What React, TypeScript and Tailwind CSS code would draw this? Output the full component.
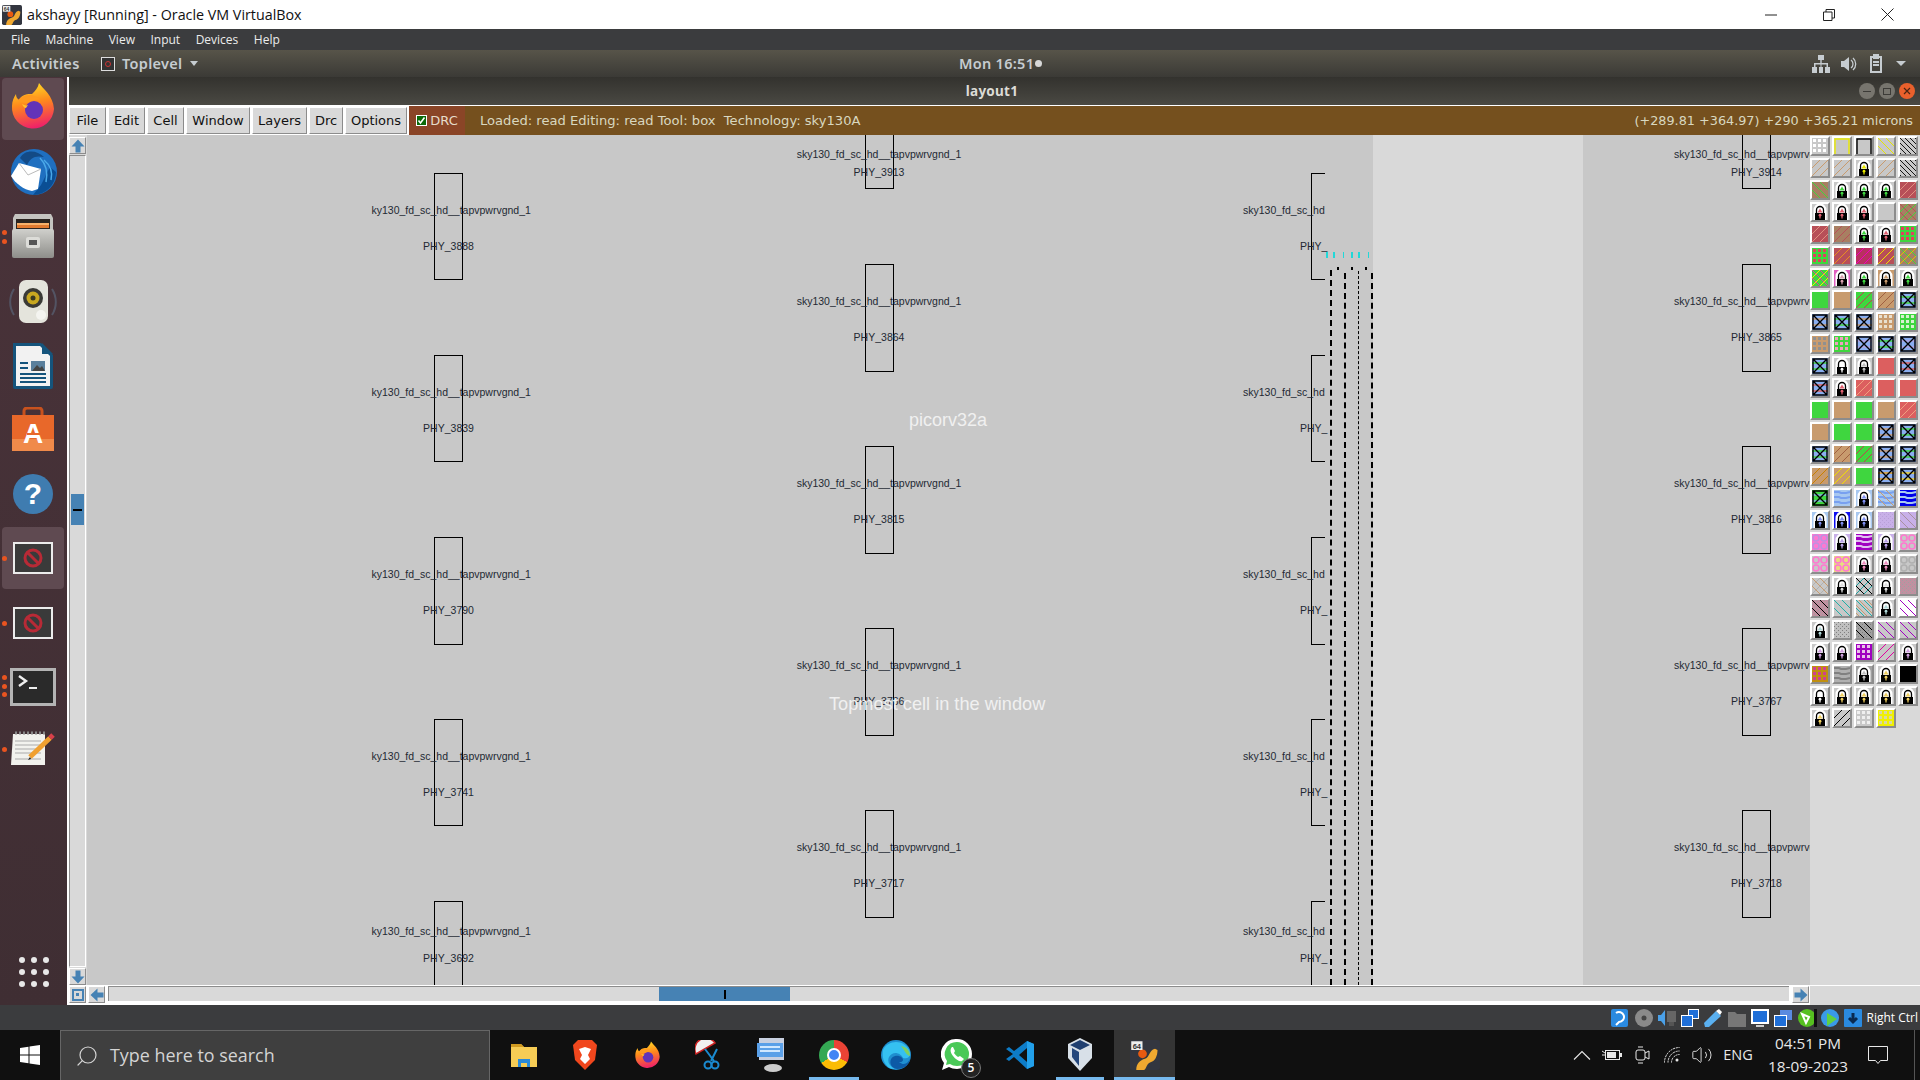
import { Search, Volume2 } from "lucide-react";
import type { ReactNode } from "react";

// ---------- layer palette (magic layout side panel) ----------
type TileSpec = {
  bg?: string;
  s?: string[]; // "/" stripes
  b?: string[]; // "\" stripes
  gap?: number;
  x?: string; // black box with a cross, on blue
  o?: string; // open outline
  dots?: string;
  checker?: string;
  waves?: string;
  lock?: string;
  rings?: string;
};

const GRAY = "#c8c8c8";
const GREEN = "#3fd63f";
const TAN = "#c89b6e";
const RED = "#b84f58";
const BROWN = "#a87f62";
const CORAL = "#dc5f5f";
const BLUE = "#8aaef0";
const TEAL = "#20b0a8";
const PURPLE = "#a000c0";
const LILAC = "#c8b0e8";
const PINK = "#ff78d0";

const TILES: Record<string, TileSpec> = {
  grid: { bg: GRAY, dots: "#ffffff" },
  yo: { bg: GRAY, o: "#e8e800" },
  ko: { bg: GRAY, o: "#000000" },
  yd: { bg: GRAY, b: ["#e6e600"] },
  kd: { bg: GRAY, b: ["#000000"], gap: 5 },
  td: { bg: GRAY, s: [TAN] },
  ly: { bg: GRAY, lock: "#e8e800" },
  bg: { bg: BROWN, b: [GREEN] },
  lg: { bg: GRAY, lock: GREEN },
  rd: { bg: RED, s: ["#e09080"] },
  lr: { bg: GRAY, lock: "#e06070" },
  p: { bg: GRAY },
  bc: { bg: BROWN, s: [GREEN], b: [RED] },
  br: { bg: BROWN, s: [RED] },
  gd: { bg: GREEN, dots: "#e04060" },
  ro: { bg: RED, s: ["#e89020"] },
  rm: { bg: "#b83060", s: ["#f000c0"] },
  ry: { bg: RED, s: ["#f0e000"] },
  by: { bg: BROWN, s: ["#e0c000"], b: [GREEN] },
  gy: { bg: GREEN, s: ["#f0f000"], b: ["#e040a0"] },
  lm: { bg: "#e060c0", lock: "#d8a0b0" },
  lt: { bg: TAN, lock: TAN },
  G: { bg: GREEN },
  T: { bg: TAN },
  gr: { bg: GREEN, s: ["#c04050"] },
  tr: { bg: TAN, s: ["#a06040"] },
  xg: { bg: BLUE, x: GREEN },
  xt: { bg: BLUE, x: TAN },
  td2: { bg: TAN, dots: "#e8e0d0" },
  gd2: { bg: GREEN, dots: "#d8f0d0" },
  tg: { bg: TAN, dots: "#909090" },
  gp: { bg: GREEN, dots: "#f0a0c0" },
  xb: { bg: BLUE, x: "#b0a0e0" },
  lw: { bg: GRAY, lock: "#ffffff" },
  lk: { bg: GRAY, lock: "#c0c0c0" },
  C: { bg: CORAL },
  xr: { bg: BLUE, x: CORAL },
  cd: { bg: CORAL, s: ["#f0a080"] },
  xo: { bg: BLUE, x: "#e8a020" },
  xy: { bg: BLUE, x: "#f0d020" },
  tt: { bg: TAN, s: ["#b07030"] },
  to: { bg: TAN, s: ["#c88000"] },
  ty: { bg: TAN, s: ["#f0e000"] },
  xd: { bg: GREEN, x: BLUE },
  wv: { bg: "#a8c8f0", waves: "#78a0f0" },
  lb: { bg: "#a8c8f0", lock: "#8090f0" },
  wt: { bg: "#a8c8f0", waves: "#78a0f0", b: [TAN] },
  bb: { bg: "#0000e8", waves: "#a8c8f0" },
  ln: { bg: "#1010f0", lock: "#8090f0" },
  lc: { bg: LILAC, checker: "#b8a0d8" },
  ld: { bg: LILAC, b: ["#a890a0"] },
  pk: { bg: PINK, rings: "#c090e0" },
  ll: { bg: LILAC, lock: "#b8a0e8" },
  ps: { bg: PURPLE, waves: "#e0c0f0" },
  pr: { bg: GRAY, rings: PINK },
  yp: { bg: "#e8dc80", rings: PINK },
  lp: { bg: GRAY, lock: "#f090c0" },
  gc: { bg: GRAY, rings: "#b0b0b0" },
  gt: { bg: GRAY, b: [TAN], s: ["#b0b0b0"] },
  ls: { bg: GRAY, lock: "#e0e0e0" },
  cx: { bg: GRAY, s: ["#20a0a0"], b: ["#000000"] },
  gk: { bg: "#c090a0", checker: "#a0a0a0" },
  gb: { bg: "#c090a0", checker: "#a0a0a0", b: ["#000000"] },
  te: { bg: GRAY, b: [TEAL] },
  tn: { bg: GRAY, b: [TEAL, TAN] },
  le: { bg: GRAY, lock: "#b0d8d8" },
  wp: { bg: "#ffffff", b: [PURPLE] },
  ck: { bg: "#c0c0c0", checker: "#808080" },
  ka: { bg: "#a0a0a0", checker: "#808080", b: ["#000000"] },
  pd: { bg: GRAY, b: [PURPLE] },
  lu: { bg: GRAY, lock: "#d0a0e0" },
  pu: { bg: PURPLE, dots: "#e8c0e8" },
  mg: { bg: GRAY, s: ["#e000a0"] },
  go: { bg: "#c09010", dots: "#d04090" },
  gw: { bg: "#b0b0b0", waves: "#808080" },
  lq: { bg: "#a0a0a0", lock: "#c0c0c0" },
  lo: { bg: GRAY, lock: "#f0d060" },
  K: { bg: "#000000" },
  ln2: { bg: GRAY, lock: "#ffffff" },
  sk: { bg: GRAY, s: ["#000000"] },
  wd: { bg: GRAY, dots: "#f0f0f0" },
  yl: { bg: "#f0f000", dots: "#d8d8a0" },
};

const PALETTE = `grid yo ko yd kd
td td ly td kd
bg lg lg lg rd
lr lr lr p bc
rd br lg lr gd
gd ro rm ry by
gy lm lg lt lg
G T gr tr xg
xt xg xt td2 gd2
tg gp xb xg xb
xg lw lk C xr
xr lr cd C C
G T G T cd
T G G xt xg
xg tr gr xt xg
to ty G xo xy
xd wv lb wt bb
lb ln lb lc ld
pk ll ps ll pr
pr yp lp lp gc
gt ls cx ls gk
gb te tn le wp
le ck ka pd pd
lu lu pu mg lu
go gw lq lo K
ln2 lo lo lo lo
lo sk wd yl`;

function Lock({ hole }: { hole: string }) {
  return (
    <g>
      <path d="M1.500 16V6a6.500 6.500 0 0 1 13 0v10z" fill="#fff" />
      <path d="M4.500 9V6a3.500 3.500 0 0 1 7 0v3" fill="none" stroke="#000" strokeWidth="1.300" />
      <path d="M8 4.500 L10.500 8.500 H5.500z" fill={hole} />
      <rect x="3" y="9" width="10" height="7" fill="#000" />
      <circle cx="8" cy="11.200" r="1.400" fill={hole} />
      <rect x="7.400" y="11.500" width="1.200" height="3" fill={hole} />
    </g>
  );
}

function Tile({ code }: { code: string }) {
  const t = TILES[code];
  const offsets = [-16, -8, 0, 8, 16];
  const gap = t.gap ?? 8;
  const fine = gap === 8 ? offsets : [-15, -10, -5, 0, 5, 10, 15];
  return (
    <div className="h-5 w-5 border-2 border-t-white border-l-white border-r-[#8c8c8c] border-b-[#8c8c8c] bg-[#c8c8c8]">
      <svg width="16" height="16" viewBox="0 0 16 16" className="block">
        <rect width="16" height="16" fill={t.bg ?? GRAY} />
        {t.waves && [2, 7, 12].map((y) => <path key={y} d={`M0 ${y}h5l2 1h5l4-1`} stroke={t.waves} strokeWidth="2" fill="none" />)}
        {t.checker && Array.from({ length: 64 }, (_, i) => (i + (i >> 3)) % 2 === 0 && <rect key={i} x={(i % 8) * 2} y={(i >> 3) * 2} width="1" height="1" fill={t.checker} />)}
        {t.dots && [1, 6, 11].flatMap((y) => [1, 6, 11].map((x) => <rect key={`${x}-${y}`} x={x} y={y} width="3" height="3" fill={t.dots} />))}
        {t.rings && [4, 12].flatMap((y) => [4, 12].map((x) => <circle key={`${x}-${y}`} cx={x} cy={y} r="3" fill="none" stroke={t.rings} strokeWidth="1.600" />))}
        {t.s?.map((c, j) => fine.map((k) => <path key={`${j}-${k}`} d={`M${k + j * 3} 16L${k + j * 3 + 16} 0`} stroke={c} strokeWidth="1" />))}
        {t.b?.map((c, j) => fine.map((k) => <path key={`${j}-${k}`} d={`M${k + j * 3} 0L${k + j * 3 + 16} 16`} stroke={c} strokeWidth={gap === 8 ? 1 : 0.9} />))}
        {t.o && <path d="M1 16V1h14v15" fill="none" stroke={t.o} strokeWidth="1.400" />}
        {t.x && (
          <g>
            <path d="M0 5h16M0 11h16" stroke={t.x} strokeWidth="1.500" />
            <path d="M1 1h14v14h-14zM1 1l14 14M15 1L1 15" fill="none" stroke="#000" strokeWidth="1.400" />
          </g>
        )}
        {t.lock && <Lock hole={t.lock} />}
      </svg>
    </div>
  );
}

function LayerPanel() {
  const codes = PALETTE.split(/\s+/);
  return (
    <div className="h-full w-[110px] shrink-0 bg-[#d9d9d9] pt-px">
      <div className="grid grid-cols-[repeat(5,20px)] gap-[2px]">
        {codes.map((c, i) => (
          <Tile key={i} code={c} />
        ))}
      </div>
    </div>
  );
}

// ---------- layout canvas ----------
const COL_A = [
  { top: 173, h: 107, text: 210, phy: 246, id: "3888" },
  { top: 355, h: 107, text: 392, phy: 428, id: "3839" },
  { top: 537, h: 108, text: 574, phy: 610, id: "3790" },
  { top: 719, h: 107, text: 756, phy: 792, id: "3741" },
  { top: 901, h: 110, text: 931, phy: 958, id: "3692" },
];
const COL_B = [
  { top: 120, h: 69, text: 154, phy: 172, id: "3913", mate: "3914" },
  { top: 264, h: 108, text: 301, phy: 337, id: "3864", mate: "3865" },
  { top: 446, h: 108, text: 483, phy: 519, id: "3815", mate: "3816" },
  { top: 628, h: 108, text: 665, phy: 701, id: "3766", mate: "3767" },
  { top: 810, h: 108, text: 847, phy: 883, id: "3717", mate: "3718" },
];
const CELL = "sky130_fd_sc_hd__tapvpwrvgnd_1";
const LABEL = "absolute -translate-y-1/2 whitespace-nowrap text-[10.5px] leading-none text-[#232833]";

// canvas starts at page position 87,135
const cx = (x: number) => x - 87;
const cy = (y: number) => y - 135;

function CellBox({ left, top, w, h, open }: { left: number; top: number; w: number; h: number; open?: boolean }) {
  return (
    <div
      className={open ? "absolute border-y border-l border-black" : "absolute border border-black"}
      style={{ left: cx(left), top: cy(top), width: w, height: h }}
    />
  );
}

function Label({ x, y, center, children }: { x: number; y: number; center?: boolean; children: ReactNode }) {
  return (
    <span className={center ? `${LABEL} -translate-x-1/2` : LABEL} style={{ left: cx(x), top: cy(y) }}>
      {children}
    </span>
  );
}

function Canvas() {
  return (
    <div className="relative h-full min-w-0 flex-1 overflow-hidden bg-[#c8c8c8]">
      {/* lighter band outside the die */}
      <div className="absolute inset-y-0 left-[1286px] w-[210px] bg-[#d9d9d9]" />

      {COL_A.map((r) => (
        <div key={r.id}>
          <CellBox left={434} top={r.top} w={29} h={r.h} />
          <Label x={371.5} y={r.text}>{CELL.slice(1)}</Label>
          <Label x={448.5} y={r.phy} center>PHY_{r.id}</Label>
          <CellBox left={1311} top={r.top} w={14} h={r.h} open />
          <Label x={1243} y={r.text}>sky130_fd_sc_hd</Label>
          <Label x={1300} y={r.phy}>PHY_</Label>
        </div>
      ))}

      {COL_B.map((r) => (
        <div key={r.id}>
          <CellBox left={865} top={r.top} w={29} h={r.h} />
          <Label x={879} y={r.text} center>{CELL}</Label>
          <Label x={879} y={r.phy} center>PHY_{r.id}</Label>
          <CellBox left={1742} top={r.top} w={29} h={r.h} />
          <Label x={1674} y={r.text}>{CELL}</Label>
          <Label x={1756.5} y={r.phy} center>PHY_{r.mate}</Label>
        </div>
      ))}

      {/* power straps at the die edge */}
      {[
        { x: 1330, w: 2, top: 270 },
        { x: 1344, w: 2, top: 273 },
        { x: 1358, w: 1, top: 271 },
        { x: 1371, w: 2, top: 273 },
      ].map((s) => (
        <div
          key={s.x}
          className="absolute bottom-0 border-l-2 border-dashed border-black"
          style={{ left: cx(s.x), top: cy(s.top), borderLeftWidth: s.w }}
        />
      ))}
      {[1337, 1351, 1365].map((x) => (
        <div key={x} className="absolute h-[3px] w-[2px] bg-black" style={{ left: cx(x), top: cy(267) }} />
      ))}
      {[1326, 1332.5, 1343, 1350.5, 1357.5, 1368].map((x, i) => (
        <div key={x} className={i === 2 || i === 5 ? "absolute h-[6px] w-px bg-[#22d8d8]" : "absolute h-[6px] w-[2px] bg-[#22d8d8]"} style={{ left: cx(x), top: cy(252) }} />
      ))}

      {/* hover hints that magic leaves on screen */}
      <span className="absolute left-[822px] top-[285px] -translate-y-1/2 font-['Liberation_Sans'] text-[18px] leading-none text-[#f0f0f0]">picorv32a</span>
      <span className="absolute left-[742px] top-[569px] -translate-y-1/2 font-['Liberation_Sans'] text-[18.2px] leading-none text-[#f0f0f0]">Topmost cell in the window</span>
    </div>
  );
}

// ---------- Tk widgets ----------
function Bevel({ className, children }: { className: string; children?: ReactNode }) {
  return (
    <div className={`flex items-center justify-center border border-t-white border-l-white border-r-[#8c8c8c] border-b-[#8c8c8c] bg-[#d9d9d9] ${className}`}>
      {children}
    </div>
  );
}

function Arrow({ dir }: { dir: "up" | "down" | "left" | "right" }) {
  const rot = { up: "rotate-0", down: "rotate-180", left: "-rotate-90", right: "rotate-90" }[dir];
  return (
    <svg width="14" height="14" viewBox="0 0 14 14" className={rot}>
      <path d="M7 0.5 L13.5 7.5 H9.5 V13.5 H4.5 V7.5 H0.5z" fill="#4682b4" />
    </svg>
  );
}

const MENU = [
  { label: "File", w: "w-[37px]" },
  { label: "Edit", w: "w-[37px]" },
  { label: "Cell", w: "w-[37px]" },
  { label: "Window", w: "w-[64px]" },
  { label: "Layers", w: "w-[55px]" },
  { label: "Drc", w: "w-[34px]" },
  { label: "Options", w: "w-[62px]" },
];

function Toolbar() {
  return (
    <div className="flex h-[30px] shrink-0 border-t border-white bg-[#75501e] font-['DejaVu_Sans'] text-[13px]">
      <div className="flex h-full gap-[2px] bg-white pr-[2px] pt-px text-[#111]">
        {MENU.map((m) => (
          <Bevel key={m.label} className={`h-[27px] ${m.w}`}>{m.label}</Bevel>
        ))}
      </div>
      <div className="flex h-full w-[56px] shrink-0 items-center justify-center gap-[3px] bg-[#8a4527] text-[#e6dccb]">
        <span className="flex h-[11px] w-[11px] items-center justify-center border border-white bg-[#0a6a0a]">
          <svg width="9" height="9" viewBox="0 0 9 9"><path d="M1.500 4.500 L3.500 7 L7.500 1.500" fill="none" stroke="#fff" strokeWidth="1.600" /></svg>
        </span>
        DRC
      </div>
      <div className="flex min-w-0 flex-1 items-center justify-between pl-[15px] pr-[7px] text-[#d9d8c0]">
        <span className="whitespace-pre text-[13.1px]">Loaded: read Editing: read Tool: box  Technology: sky130A</span>
        <span className="text-[12.8px]">(+289.81 +364.97) +290 +365.21 microns</span>
      </div>
    </div>
  );
}

function VerticalScroll() {
  return (
    <div className="flex h-full w-[18px] shrink-0 flex-col items-start gap-[1px] bg-[#d9d9d9] pt-[2px]">
      <Bevel className="h-[17px] w-[17px]"><Arrow dir="up" /></Bevel>
      <div className="relative w-[17px] flex-1 border border-[#8c8c8c] border-r-white border-b-white bg-[#d9d9d9]">
        <div className="absolute left-[1px] right-[1px] top-[338px] flex h-[31px] items-center justify-center bg-[#4682b4]">
          <div className="h-[2px] w-[9px] bg-black" />
        </div>
      </div>
      <Bevel className="h-[17px] w-[17px]"><Arrow dir="down" /></Bevel>
    </div>
  );
}

function HorizontalScroll() {
  return (
    <div className="flex h-[20px] shrink-0 items-start bg-white pt-[1px]">
      <Bevel className="h-[17px] w-[17px]">
        <span className="flex h-3 w-3 items-center justify-center border-2 border-[#4682b4]"><span className="h-[3px] w-[3px] bg-[#4682b4]" /></span>
      </Bevel>
      <Bevel className="ml-[2px] h-[17px] w-[17px]"><Arrow dir="left" /></Bevel>
      <div className="relative ml-[3px] h-[15px] w-[1681px] border-l border-t border-[#8c8c8c] bg-[#d9d9d9]">
        <div className="absolute bottom-0 left-[550px] top-0 flex w-[131px] items-center justify-center bg-[#4682b4]">
          <div className="h-[9px] w-[2px] bg-black" />
        </div>
      </div>
      <Bevel className="ml-[3px] h-[17px] w-[17px]"><Arrow dir="right" /></Bevel>
      <div className="ml-[1px] h-full flex-1 bg-[#d9d9d9]" />
    </div>
  );
}

// ---------- logos ----------
function Firefox({ size = 50 }: { size?: number }) {
  return (
    <svg width={size} height={size} viewBox="0 0 50 50">
      <defs>
        <linearGradient id="ffA" x1="0.3" y1="0" x2="0.5" y2="1"><stop offset="0" stopColor="#ffe226" /><stop offset="0.45" stopColor="#ff8a1c" /><stop offset="1" stopColor="#ee1f6a" /></linearGradient>
      </defs>
      <path d="M31 1c4 6 14 12 15 26a21 21 0 1 1-42-3c0-5 2-9 4-12 0 3 1 4 3 6 3-6 9-6 13-6 3-3 6-6 7-11z" fill="url(#ffA)" />
      <circle cx="26" cy="28" r="9" fill="#6233b8" />
      <path d="M10 18c6-6 17-7 22 0-7-2-10 3-14 3-3 0-5-1-8-3z" fill="#ff9a1f" />
      <path d="M14 22c2 1 4 2 6 1l-2 3c-2 0-3-2-4-4z" fill="#ffc22e" />
    </svg>
  );
}

function Thunderbird() {
  return (
    <svg width="50" height="50" viewBox="0 0 50 50">
      <circle cx="26" cy="26" r="23" fill="#1f6fc0" />
      <path d="M48 26a23 23 0 0 1-23 23l8-10 9-18z" fill="#0a4e94" />
      <path d="M12 12c5-9 17-8 24-1-9-2-14 1-17 8z" fill="#134a86" />
      <path d="M3 30l8-13 22 6-3 20-6 2c-8-1-17-8-21-15z" fill="#fff" />
      <path d="M11 17l9 12 13-6" fill="none" stroke="#bbb" strokeWidth="1" />
      <path d="M36 14c6 5 9 12 7 20M32 12c6 6 8 14 6 24" fill="none" stroke="#4aa8e8" strokeWidth="1.500" />
    </svg>
  );
}

function FileCabinet() {
  return (
    <svg width="44" height="46" viewBox="0 0 44 46">
      <defs>
        <linearGradient id="cabFront" x1="0" y1="0" x2="0" y2="1"><stop offset="0" stopColor="#d0d0cc" /><stop offset="1" stopColor="#8e8e8a" /></linearGradient>
      </defs>
      <path d="M4 1h36l2 4v14H2V5z" fill="#c4c4c0" />
      <rect x="5" y="6" width="34" height="11" fill="#2a2420" />
      <rect x="6" y="10" width="32" height="2" fill="#f6b06a" />
      <rect x="6" y="12" width="32" height="3" fill="#e07a30" />
      <rect x="1" y="16" width="42" height="29" rx="2" fill="url(#cabFront)" />
      <rect x="15" y="24" width="14" height="11" rx="2" fill="#dcdcd8" />
      <rect x="18" y="27" width="8" height="5" fill="#555" />
    </svg>
  );
}

function Speaker() {
  return (
    <svg width="48" height="46" viewBox="0 0 48 46">
      <path d="M5 10a24 24 0 0 0 0 26M43 10a24 24 0 0 1 0 26" stroke="#5b6a80" strokeWidth="2" fill="none" opacity="0.6" />
      <rect x="10" y="1" width="29" height="43" rx="7" fill="#e4e4dc" />
      <circle cx="24" cy="19" r="10" fill="#3a3a36" />
      <circle cx="24" cy="19" r="6.500" fill="#c8a820" />
      <circle cx="24" cy="19" r="2.500" fill="#3a3a20" />
      <circle cx="32" cy="36" r="5" fill="#f4f4f0" />
    </svg>
  );
}

function Writer() {
  return (
    <svg width="42" height="48" viewBox="0 0 42 48">
      <path d="M1 1h28l12 12v32a2 2 0 0 1-2 2H3a2 2 0 0 1-2-2z" fill="#15547c" />
      <path d="M4 4h24l10 10v30H4z" fill="#f2f2f2" />
      <path d="M30 1l11 11H30z" fill="#15547c" />
      <rect x="19" y="19" width="14" height="10" fill="#5a7f9c" />
      <path d="M20 29l5-6 3 3 2-2 3 5z" fill="#444" />
      {[20, 25].map((y) => <rect key={y} x="8" y={y} width="8" height="2" fill="#15547c" />)}
      {[31, 35, 39].map((y) => <rect key={y} x="8" y={y} width="26" height="2" fill="#15547c" />)}
    </svg>
  );
}

function Software() {
  return (
    <svg width="42" height="44" viewBox="0 0 42 44">
      <path d="M12 8V4a3 3 0 0 1 3-3h12a3 3 0 0 1 3 3v4" fill="none" stroke="#c8521e" strokeWidth="3" />
      <path d="M0 8h42v36H0z" fill="#f08a4a" />
      <path d="M0 8h42v24H0z" fill="#e8682a" />
      <text x="21" y="36" textAnchor="middle" fontSize="28" fontWeight="700" fontFamily="Liberation Sans" fill="#fff">A</text>
      <rect x="15" y="26" width="14" height="2" fill="#e8682a" />
    </svg>
  );
}

function Help() {
  return (
    <div className="flex h-10 w-10 items-center justify-center rounded-full bg-[#3f7cb0] font-['Liberation_Sans'] text-[30px] font-bold leading-none text-white">?</div>
  );
}

function NoSymbol() {
  return (
    <div className="flex h-8 w-10 items-center justify-center border-2 border-[#ececec] bg-[#3a3a3a]">
      <svg width="20" height="20" viewBox="0 0 20 20">
        <circle cx="10" cy="10" r="8" fill="none" stroke="#b82a36" strokeWidth="3" />
        <path d="M4.500 4.500l11 11" stroke="#b82a36" strokeWidth="3" />
      </svg>
    </div>
  );
}

function Terminal() {
  return (
    <div className="flex h-[38px] w-[46px] items-start border-[3px] border-[#b4b4b4] bg-[#2a2a2a]">
      <svg width="30" height="24" viewBox="0 0 30 24">
        <path d="M6 5l7 5-7 5" fill="none" stroke="#eee" strokeWidth="2.400" />
        <path d="M16 17h8" stroke="#eee" strokeWidth="2" />
      </svg>
    </div>
  );
}

function Gedit() {
  return (
    <svg width="46" height="36" viewBox="0 0 46 36">
      <path d="M3 3h32v31H1z" fill="#f2f2ee" />
      {[10, 14, 18, 22, 28].map((y) => <path key={y} d={`M5 ${y}h26`} stroke="#aaa" strokeWidth="1" />)}
      <path d="M5 2h30" stroke="#888" strokeWidth="3" strokeDasharray="2 2" />
      <path d="M20 26L40 7" stroke="#f0a030" strokeWidth="5" />
      <path d="M40 7l3-3" stroke="#d8404a" strokeWidth="5" />
      <path d="M20 26l-2 3 3-1z" fill="#111" />
    </svg>
  );
}

function DockSlot({ top, dots = [], active, children }: { top: string; dots?: string[]; active?: boolean; children: ReactNode }) {
  return (
    <div className={`relative ml-[2px] flex h-[62px] w-[62px] shrink-0 items-center justify-center rounded-[4px] ${top} ${active ? "bg-[#5f4a51]" : ""}`}>
      {dots.map((d) => (
        <span key={d} className={`absolute left-0 h-[5px] w-[5px] rounded-full bg-[#e95420] ${d}`} />
      ))}
      {children}
    </div>
  );
}

function Dock() {
  return (
    <div className="flex h-full w-[67px] shrink-0 flex-col bg-gradient-to-b from-[#4a333a] to-[#3f2e33] pt-px">
      <DockSlot top="" active><span className="-mt-[4px]"><Firefox /></span></DockSlot>
      <DockSlot top="mt-0"><Thunderbird /></DockSlot>
      <DockSlot top="mt-[3px]" dots={["top-[25px]", "top-[34px]"]}><FileCabinet /></DockSlot>
      <DockSlot top="mt-[4px]"><Speaker /></DockSlot>
      <DockSlot top="mt-[2px]"><Writer /></DockSlot>
      <DockSlot top="mt-[1px]"><Software /></DockSlot>
      <DockSlot top="mt-[3px]"><Help /></DockSlot>
      <DockSlot top="mt-[2px]" active dots={["top-[29px]"]}><NoSymbol /></DockSlot>
      <DockSlot top="mt-[3px]" dots={["top-[29px]"]}><NoSymbol /></DockSlot>
      <DockSlot top="mt-[2px]" dots={["top-[19px]", "top-[28px]", "top-[36px]"]}><Terminal /></DockSlot>
      <DockSlot top="mt-0" dots={["top-[29px]"]}><Gedit /></DockSlot>
      <div className="mx-auto mt-[177px] grid grid-cols-3 gap-x-[6px] gap-y-[6px]">
        {Array.from({ length: 9 }, (_, i) => <span key={i} className="h-[6px] w-[6px] rounded-full bg-[#e8e8e8]" />)}
      </div>
    </div>
  );
}

// ---------- GNOME bars ----------
function GnomeBar() {
  return (
    <div className="relative flex h-[27px] shrink-0 items-center bg-gradient-to-b from-[#575449] to-[#3b3a36] font-['Noto_Sans'] text-[14.5px] font-semibold tracking-[0.02em] text-[#c6ccd0]">
      <span className="ml-3 w-[89px]">Activities</span>
      <span className="flex h-[14px] w-[14px] items-center justify-center border border-[#ddd] bg-[#333]"><span className="h-[6px] w-[6px] rounded-full border border-[#c33]" /></span>
      <span className="ml-[7px]">Toplevel</span>
      <span className="ml-[8px] h-0 w-0 border-x-[4px] border-t-[5px] border-x-transparent border-t-[#c6ccd0]" />
      <span className="absolute left-[959px] flex items-center gap-[1px]">Mon 16:51 <span className="h-[7px] w-[7px] rounded-full bg-[#d8d8d8]" /></span>
      <div className="ml-auto mr-[14px] flex items-center gap-[10px]">
        <svg width="18" height="18" viewBox="0 0 18 18" fill="#c6ccd0"><path d="M6 0h6v5H9.700v3H16v4h2v6h-5v-6h1.500V9.500h-5V12H11v6H7v-6h1.500V9.500h-5V12H5v6H0v-6h2V8h6.300V5H6z" /></svg>
        <svg width="18" height="18" viewBox="0 0 18 18" fill="#c6ccd0"><path d="M1 6h3l5-4v14l-5-4H1z" /><path d="M11 5a5 5 0 0 1 0 8M13 3a8 8 0 0 1 0 12" stroke="#c6ccd0" strokeWidth="1.300" fill="none" /></svg>
        <svg width="18" height="20" viewBox="0 0 18 20" fill="none" stroke="#c6ccd0" strokeWidth="2"><path d="M3 3h10v15H3zM6 1h4v3H6zM5 8h6M5 11h6" /></svg>
        <span className="h-0 w-0 border-x-[5px] border-t-[5px] border-x-transparent border-t-[#c6ccd0]" />
      </div>
    </div>
  );
}

function WindowTitle() {
  return (
    <div className="relative flex h-[28px] shrink-0 items-center justify-end gap-1 bg-gradient-to-b from-[#33322e] to-[#4a4943] pr-[5px]">
      <span className="absolute left-[923px] -translate-x-1/2 font-['Noto_Sans'] text-[13.5px] font-bold tracking-[0.02em] text-[#dcdcd6]">layout1</span>
      {["bg-[#77756e]", "bg-[#77756e]"].map((c, i) => (
        <span key={i} className={`flex h-4 w-4 items-center justify-center rounded-full ${c}`}>
          {i === 0 ? <span className="h-[1px] w-2 bg-[#3c3b37]" /> : <span className="h-[7px] w-[8px] border border-[#3c3b37]" />}
        </span>
      ))}
      <span className="flex h-4 w-4 items-center justify-center rounded-full bg-[#e9602c]">
        <svg width="8" height="8" viewBox="0 0 8 8"><path d="M1 1l6 6M7 1L1 7" stroke="#4a2412" strokeWidth="1.200" /></svg>
      </span>
    </div>
  );
}

// ---------- VirtualBox frame ----------
function VBoxLogo({ size = 24 }: { size?: number }) {
  return (
    <svg width={size} height={size} viewBox="0 0 24 24">
      <rect width="24" height="24" rx="2" fill="#333640" />
      <path d="M5 24c0-5 3-8 7-9 4-1 3-7 8-8l2 1c0 5-2 9-6 10-3 1-3 6-5 6z" fill="#f0a830" />
      <circle cx="10" cy="11" r="3.500" fill="#e85a10" />
      <rect x="1" y="1" width="9" height="7" fill="#eee" />
      <text x="5.500" y="7" textAnchor="middle" fontSize="6" fontWeight="700" fontFamily="Liberation Sans" fill="#333">64</text>
    </svg>
  );
}

function TitleBar() {
  return (
    <div className="flex h-[29px] shrink-0 items-center bg-white font-['Open_Sans']">
      <span className="ml-[2px]"><VBoxLogo size={20} /></span>
      <span className="ml-[5px] text-[14.3px] text-[#111]">akshayy [Running] - Oracle VM VirtualBox</span>
      <div className="ml-auto mr-[26px] flex items-center gap-[46px]">
        <svg width="12" height="12" viewBox="0 0 12 12"><path d="M0 6h12" stroke="#222" /></svg>
        <svg width="12" height="12" viewBox="0 0 12 12" fill="none" stroke="#222"><path d="M.5 3h8.500v8.500H.5zM3 3V.5h8.500V9H9" /></svg>
        <svg width="13" height="13" viewBox="0 0 13 13"><path d="M.5.5l12 12M12.500.5l-12 12" stroke="#222" /></svg>
      </div>
    </div>
  );
}

function VBoxMenu() {
  return (
    <div className="flex h-[21px] shrink-0 items-center gap-[15.5px] bg-[#3b3c3e] pl-[11px] font-['Open_Sans'] text-[12px] text-[#ececec]">
      {["File", "Machine", "View", "Input", "Devices", "Help"].map((m) => <span key={m}>{m}</span>)}
    </div>
  );
}

function StatusIcon({ children }: { children: ReactNode }) {
  return <svg width="20" height="20" viewBox="0 0 20 20" className="shrink-0">{children}</svg>;
}

function StatusBar() {
  return (
    <div className="flex h-[25px] shrink-0 items-center justify-end gap-[3.3px] bg-[#3b3c3e] pr-[2px] font-['Open_Sans'] text-[12px] text-white">
      <StatusIcon><rect x="1" y="1" width="17" height="18" rx="2" fill="#2a8ae0" /><path d="M6 5a5 5 0 1 1 3 9l-3 3" fill="none" stroke="#fff" strokeWidth="2" /></StatusIcon>
      <StatusIcon><circle cx="10" cy="10" r="9" fill="#8a8a8a" /><circle cx="10" cy="10" r="2.500" fill="#444" /></StatusIcon>
      <StatusIcon><path d="M1 7h3l4-5v16l-4-5H1z" fill="#4aa0e8" /><rect x="10" y="3" width="9" height="11" fill="#666" /><rect x="12" y="14" width="5" height="4" fill="#555" /></StatusIcon>
      <StatusIcon><rect x="8" y="1" width="11" height="10" fill="#fff" /><rect x="9" y="2" width="9" height="8" fill="#1f6fd8" /><rect x="1" y="7" width="12" height="12" fill="#fff" /><rect x="2" y="8" width="10" height="10" fill="#1f6fd8" /></StatusIcon>
      <StatusIcon><path d="M1 15L13 3l5 5L6 19H2z" fill="#5ab0f0" /><path d="M13 3l3-2 3 3-2 3z" fill="#fff" /></StatusIcon>
      <StatusIcon><path d="M1 4h7l2 2h9v13H1z" fill="#777" /></StatusIcon>
      <StatusIcon><rect x="1" y="1" width="18" height="15" fill="#fff" /><rect x="3" y="3" width="14" height="11" fill="#1f6fd8" /><rect x="6" y="17" width="8" height="2" fill="#ccc" /></StatusIcon>
      <StatusIcon><rect x="7" y="2" width="12" height="10" fill="#5a8ae0" /><rect x="1" y="7" width="13" height="12" fill="#fff" /><rect x="2" y="8" width="11" height="10" fill="#1f6fd8" /></StatusIcon>
      <StatusIcon><circle cx="10" cy="10" r="9" fill="#56c020" /><path d="M5 6l7 3-3 6z" fill="none" stroke="#fff" strokeWidth="2" /><rect x="17" y="1" width="3" height="18" fill="#111" /></StatusIcon>
      <StatusIcon><circle cx="10" cy="10" r="9" fill="#3a9ae8" /><path d="M7 5l10 6-10 7z" fill="#60d040" /></StatusIcon>
      <StatusIcon><rect x="1" y="1" width="18" height="18" rx="1" fill="#2a8ae0" /><path d="M10 5v8M6 10l4 4 4-4" stroke="#0a2a50" strokeWidth="3" fill="none" /></StatusIcon>
      <span className="whitespace-nowrap">Right Ctrl</span>
    </div>
  );
}

// ---------- Windows taskbar ----------
function TaskIcon({ w, active, bar, children }: { w: string; active?: boolean; bar?: string; children: ReactNode }) {
  return (
    <div className={`relative flex h-full shrink-0 items-center justify-center ${w} ${active ? "bg-[#343434]" : ""}`}>
      {children}
      {bar && <span className={`absolute bottom-0 h-[3px] bg-[#76b9ed] ${bar}`} />}
    </div>
  );
}

function TrayBox({ w, children }: { w: string; children: ReactNode }) {
  return <div className={`flex h-full shrink-0 items-center justify-center ${w}`}>{children}</div>;
}

function Taskbar() {
  return (
    <div className="flex h-[50px] shrink-0 items-stretch bg-[#101010] font-['Open_Sans'] text-white">
      <div className="flex w-[60px] shrink-0 items-center justify-center">
        <svg width="20" height="20" viewBox="0 0 20 20" fill="#fff"><path d="M0 3l8.500-1.200V9.500H0zM9.500 1.600L20 0v9.500H9.500zM0 10.500h8.500v7.700L0 17zM9.500 10.500H20V20L9.500 18.400z" /></svg>
      </div>
      <div className="flex w-[430px] shrink-0 items-center gap-[11px] border border-b-0 border-[#666] bg-[#3f3f3f] pl-[14px] text-[#d4d4d4]">
        <Search size={24} strokeWidth={1.200} className="-scale-x-100" />
        <span className="text-[17.9px]">Type here to search</span>
      </div>
      <TaskIcon w="w-[67px]">
        <svg width="28" height="28" viewBox="0 0 28 28"><path d="M1 3h10l3 3h13v20H1z" fill="#f6cc55" /><path d="M1 3h10l3 3H1z" fill="#d09a20" /><path d="M8 26v-8h12v8h-3v-4h-6v4z" fill="#2a8ad8" /></svg>
      </TaskIcon>
      <TaskIcon w="w-[56px]">
        <svg width="26" height="30" viewBox="0 0 26 30"><path d="M6 0h14l5 5-2 15-10 10L3 20 1 5z" fill="#f1471d" /><path d="M7 9l6-2 6 2-3 6 2 4-5 5-5-5 2-4z" fill="#fff" /></svg>
      </TaskIcon>
      <TaskIcon w="w-[68px]"><Firefox size={29} /></TaskIcon>
      <TaskIcon w="w-[58px]">
        <svg width="30" height="30" viewBox="0 0 30 30"><path d="M1 14A11 11 0 0 1 20 3z" fill="#f0f0f0" stroke="#c22" strokeWidth="1.500" /><path d="M10 9l9 12M22 9L16 21" stroke="#1a8ad0" strokeWidth="2" /><circle cx="20" cy="25" r="3.500" fill="none" stroke="#1a8ad0" strokeWidth="2" /><circle cx="13" cy="25" r="3.500" fill="none" stroke="#1a8ad0" strokeWidth="2" /></svg>
      </TaskIcon>
      <TaskIcon w="w-[64px]">
        <svg width="30" height="36" viewBox="0 0 30 36"><rect x="3" y="1" width="25" height="22" fill="#c8d0e0" /><rect x="1" y="6" width="26" height="14" fill="#5aa0e8" /><rect x="4" y="9" width="20" height="2" fill="#d0e8ff" /><rect x="4" y="13" width="20" height="2" fill="#d0e8ff" /><ellipse cx="17" cy="31" rx="9" ry="4" fill="#ccc" /></svg>
      </TaskIcon>
      <TaskIcon w="w-[62px]" bar="inset-x-[6px]">
        <div className="relative h-[30px] w-[30px] rounded-full bg-[conic-gradient(#ea4335_0_33%,#fbbc05_33%_66%,#34a853_66%_100%)]">
          <span className="absolute inset-[8px] rounded-full border-2 border-white bg-[#4285f4]" />
        </div>
      </TaskIcon>
      <TaskIcon w="w-[62px]">
        <svg width="30" height="30" viewBox="0 0 30 30"><circle cx="15" cy="15" r="15" fill="#1f8fd0" /><path d="M2 10C6 0 24-2 29 12c1 6-4 7-7 6-2-5-10-8-14-1-2 4 0 9 6 12C6 30 0 20 2 10z" fill="#35c1f1" /><path d="M16 29c-8-1-9-11-2-13 5-1 8 2 8 4s-4 3-5 1c6 6 10 2 12-2-1 6-6 10-13 10z" fill="#0c5aa6" /><path d="M20 6c5 1 9 4 9 10-4-1-5-5-9-10z" fill="#7ed060" /></svg>
      </TaskIcon>
      <TaskIcon w="w-[60px]">
        <div className="relative">
          <svg width="32" height="34" viewBox="0 0 32 34"><path d="M16 1a15 15 0 0 1 0 30c-3 0-6-1-8-2l-7 3 2-7A15 15 0 0 1 16 1z" fill="#fff" /><path d="M16 4a12 12 0 0 1 0 24c-3 0-5-1-7-2l-4 1 1-4A12 12 0 0 1 16 4z" fill="#4ac958" /><path d="M11 9c-2 2-2 5 1 9s7 6 9 5l2-2-4-3-2 1c-2-1-3-3-4-4l1-2-2-4z" fill="#fff" /></svg>
          <span className="absolute -bottom-[6px] -right-[8px] flex h-5 w-5 items-center justify-center rounded-full border border-[#777] bg-[#222] text-[12px] font-semibold leading-none">5</span>
        </div>
      </TaskIcon>
      <TaskIcon w="w-[66px]">
        <svg width="30" height="30" viewBox="0 0 30 30"><path d="M22 1l7 3v22l-7 3L9 17l-5 4-3-2 7-5-7-5 3-2 5 4z" fill="#0d7cc8" /><path d="M22 8v14l-8-7z" fill="#101010" /><path d="M22 1l7 3v22l-7 3z" fill="#22a0ea" /></svg>
      </TaskIcon>
      <TaskIcon w="w-[54px]" bar="inset-x-[3px]">
        <svg width="26" height="36" viewBox="0 0 26 36"><path d="M13 1l12 6v14L13 34 1 21V7z" fill="#d8e0e8" /><path d="M13 3l10 5-10 5L3 8z" fill="#1f3f70" /><path d="M5 11l7 4v14l-7-9z" fill="#24477c" /></svg>
      </TaskIcon>
      <TaskIcon w="w-[61px] ml-[7px]" active bar="inset-x-0"><VBoxLogo size={30} /></TaskIcon>

      <div className="ml-auto flex items-center text-[#e8e8e8]">
        <TrayBox w="w-[30px]">
          <svg width="18" height="10" viewBox="0 0 18 10" fill="none" stroke="#e8e8e8" strokeWidth="1.100"><path d="M1 9.500L9 1.500l8 8" /></svg>
        </TrayBox>
        <TrayBox w="w-[30px]">
          <svg width="20" height="12" viewBox="0 0 20 12"><path d="M0 2l3 2M0 6h3" stroke="#e8e8e8" /><rect x="3.500" y="1.500" width="14" height="9" fill="none" stroke="#e8e8e8" /><rect x="5" y="3" width="9" height="6" fill="#e8e8e8" /><rect x="18" y="4" width="2" height="4" fill="#e8e8e8" /></svg>
        </TrayBox>
        <TrayBox w="w-[30px]">
          <svg width="15" height="18" viewBox="0 0 15 18" fill="none" stroke="#e8e8e8"><rect x="1" y="4" width="9" height="10" rx="2" /><path d="M10 7l4-2v8l-4-2M3 1h5M3 17h5" /></svg>
        </TrayBox>
        <TrayBox w="w-[30px]">
          <svg width="16" height="16" viewBox="0 0 16 16" fill="none" stroke="#e8e8e8"><path d="M.5 15.500A15 15 0 0 1 15.500 .5M4 15.500A11.500 11.500 0 0 1 15.500 4M7.500 15.500a8 8 0 0 1 8-8" strokeDasharray="2 .8" /><circle cx="13" cy="13" r="1.500" fill="#e8e8e8" stroke="none" /></svg>
        </TrayBox>
        <TrayBox w="w-[30px]"><Volume2 size={22} strokeWidth={1} /></TrayBox>
        <TrayBox w="w-[42px]"><span className="text-[14.5px]">ENG</span></TrayBox>
        <div className="flex w-[98px] shrink-0 flex-col items-center text-[15.3px] leading-[23px]">
          <span>04:51 PM</span>
          <span>18-09-2023</span>
        </div>
        <TrayBox w="w-[42px]">
          <svg width="20" height="20" viewBox="0 0 20 20" fill="none" stroke="#e8e8e8"><path d="M.5 1.500h19v14h-7l-2.500 3-2.500-3h-7z" /></svg>
        </TrayBox>
        <span className="ml-[15px] mr-[5px] h-full w-px bg-[#555]" />
      </div>
    </div>
  );
}

export default function App() {
  return (
    <div className="flex h-[1080px] w-[1920px] flex-col overflow-hidden bg-[#3b3c3e] font-['Liberation_Sans',sans-serif]">
      <TitleBar />
      <VBoxMenu />
      <GnomeBar />
      <div className="flex h-[928px] shrink-0">
        <Dock />
        <div className="flex min-w-0 flex-1 flex-col border-l-2 border-white bg-[#d9d9d9]">
          <WindowTitle />
          <Toolbar />
          <div className="flex h-[850px] shrink-0">
            <VerticalScroll />
            <Canvas />
            <LayerPanel />
          </div>
          <HorizontalScroll />
        </div>
      </div>
      <StatusBar />
      <Taskbar />
    </div>
  );
}
